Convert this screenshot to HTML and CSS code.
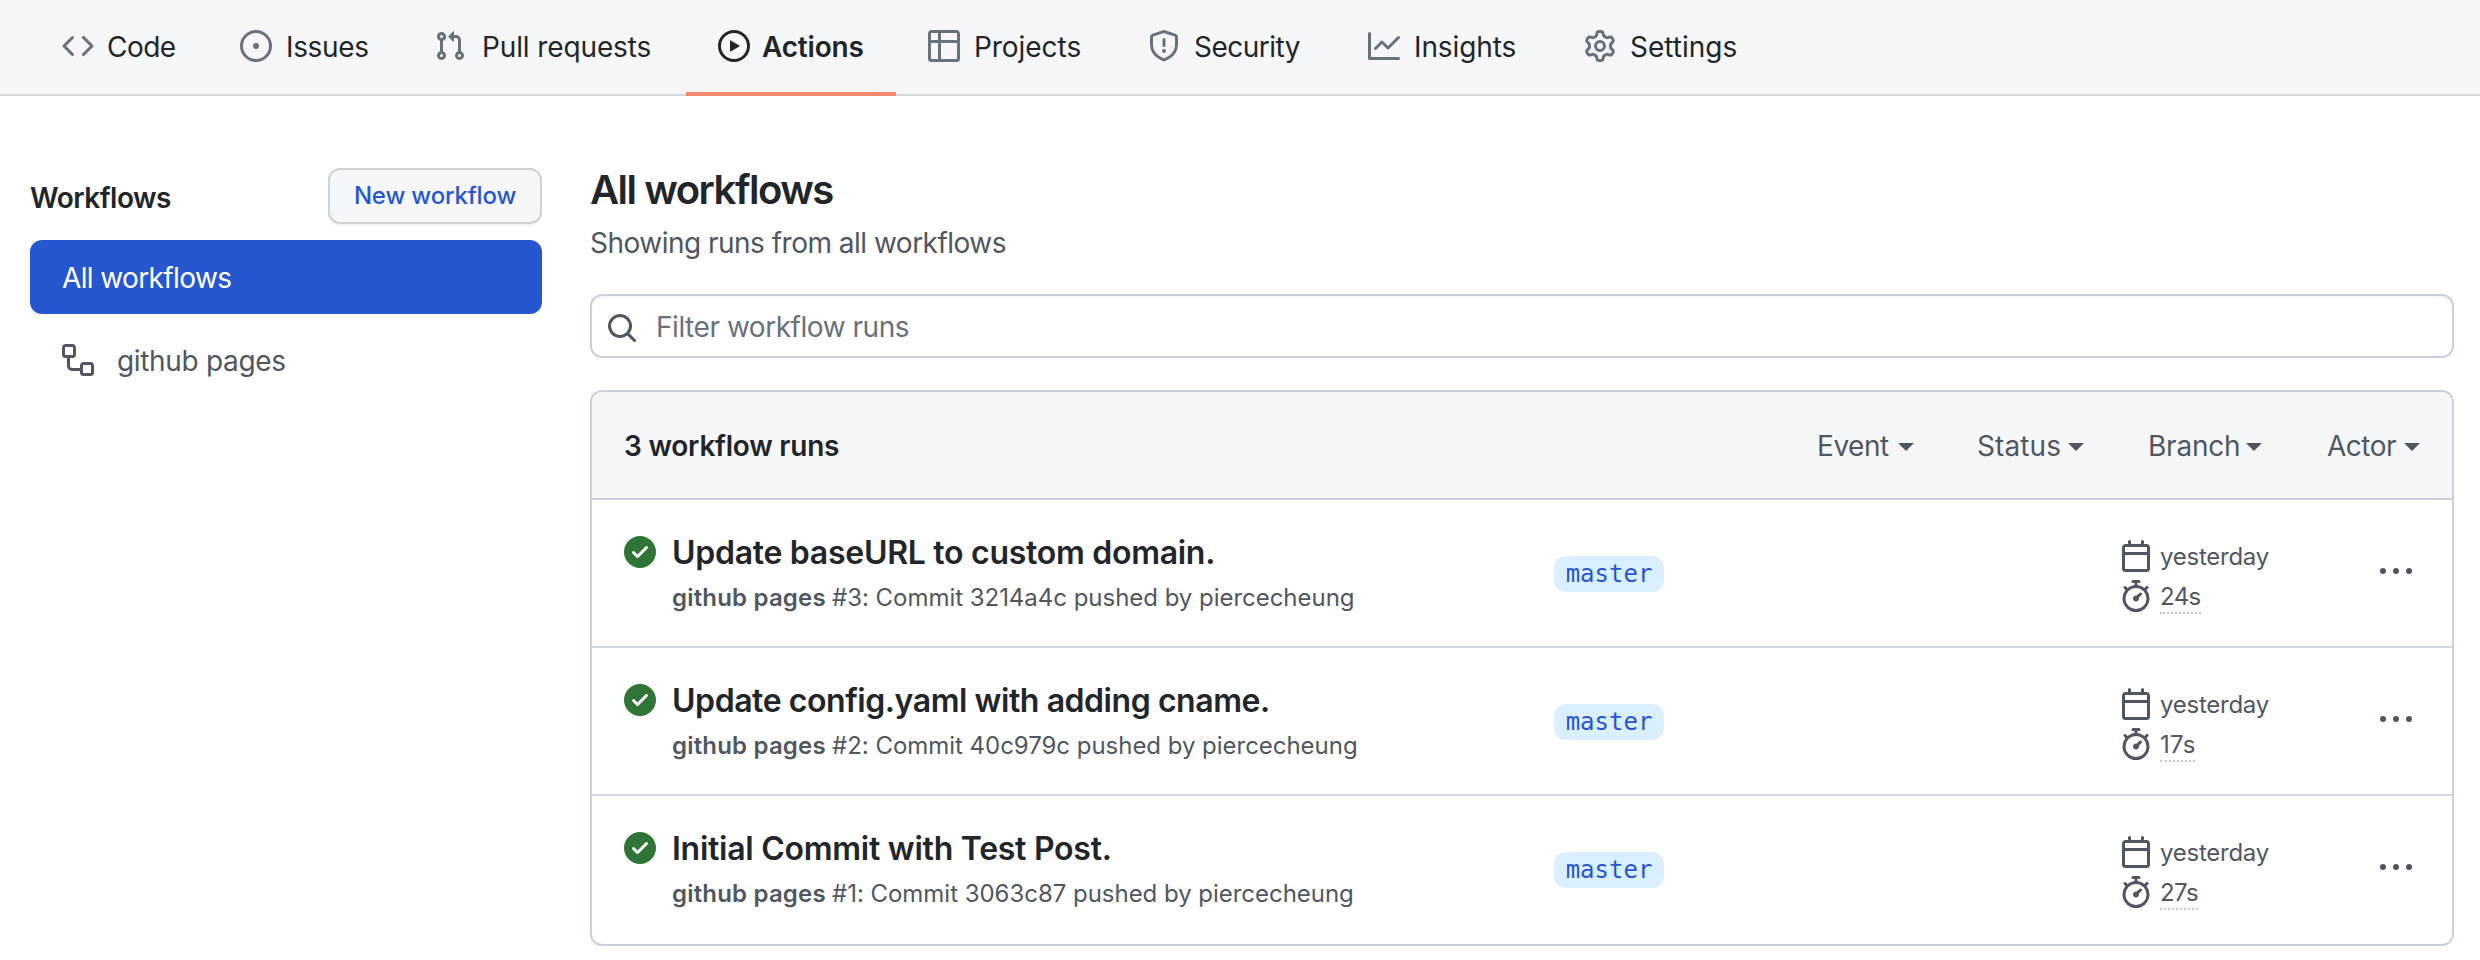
FILE: index.html
```html
<!DOCTYPE html>
<html lang="en">
<head>
<meta charset="utf-8">
<title>Workflow runs</title>
<link rel="stylesheet" href="styles.css">
</head>
<body>
<svg class="sprite" aria-hidden="true">
  <symbol id="i-check" viewBox="0 0 16 16"><path fill-rule="evenodd" d="M8 16A8 8 0 108 0a8 8 0 000 16zm3.78-9.72a.75.75 0 00-1.06-1.06L6.75 9.19 5.28 7.72a.75.75 0 00-1.06 1.06l2 2a.75.75 0 001.06 0l4.5-4.5z"/></symbol>
  <symbol id="i-calendar" viewBox="0 0 16 16"><path fill-rule="evenodd" d="M4.75 0a.75.75 0 01.75.75V2h5V.75a.75.75 0 011.5 0V2h1.25c.966 0 1.75.784 1.75 1.75v10.5A1.75 1.75 0 0113.25 16H2.75A1.75 1.75 0 011 14.25V3.75C1 2.784 1.784 2 2.75 2H4V.75A.75.75 0 014.75 0zm0 3.5h-2a.25.25 0 00-.25.25V6h11V3.75a.25.25 0 00-.25-.25H4.75zM2.5 7.5v6.75c0 .138.112.25.25.25h10.5a.25.25 0 00.25-.25V7.5h-11z"/></symbol>
  <symbol id="i-stopwatch" viewBox="0 0 16 16"><path fill-rule="evenodd" d="M5.75.75A.75.75 0 016.5 0h3a.75.75 0 010 1.5h-.75v1l-.001.041a6.718 6.718 0 013.464 1.435l.007-.006.75-.75a.75.75 0 111.06 1.06l-.75.75-.006.007a6.75 6.75 0 11-10.548 0L2.72 5.03l-.75-.75a.75.75 0 011.06-1.06l.75.75.007.006A6.718 6.718 0 017.25 2.541a.756.756 0 010-.041v-1H6.5a.75.75 0 01-.75-.75zM8 14.5A5.25 5.25 0 108 4a5.25 5.25 0 000 10.5zm.389-6.7l1.33-1.33a.75.75 0 111.061 1.06L9.45 8.861A1.502 1.502 0 018 10.75a1.5 1.5 0 11.389-2.95z"/></symbol>
  <symbol id="i-dots" viewBox="0 0 16 16"><circle cx="1.5" cy="8" r="1.5"/><circle cx="8" cy="8" r="1.5"/><circle cx="14.5" cy="8" r="1.5"/></symbol>
</svg>

<nav class="tabs">
  <a class="tab tab-code"><svg class="icon" viewBox="0 0 16 16"><path d="M4.72 3.22a.75.75 0 011.06 1.06L2.06 8l3.72 3.72a.75.75 0 11-1.06 1.06L.47 8.53a.75.75 0 010-1.06l4.25-4.25zm6.56 0a.75.75 0 10-1.06 1.06L13.94 8l-3.72 3.72a.75.75 0 101.06 1.06l4.25-4.25a.75.75 0 000-1.06l-4.25-4.25z"/></svg><span>Code</span></a>
  <a class="tab tab-issues"><svg class="icon" viewBox="0 0 16 16"><path fill-rule="evenodd" d="M8 9.5a1.5 1.5 0 100-3 1.5 1.5 0 000 3zM8 0a8 8 0 100 16A8 8 0 008 0zM1.5 8a6.5 6.5 0 1113 0 6.5 6.5 0 01-13 0z"/></svg><span>Issues</span></a>
  <a class="tab tab-pulls"><svg class="icon" viewBox="0 0 16 16"><path fill-rule="evenodd" d="M7.177 3.073L9.573.677A.25.25 0 0110 .854v4.792a.25.25 0 01-.427.177L7.177 3.427a.25.25 0 010-.354zM3.75 2.5a.75.75 0 100 1.5.75.75 0 000-1.5zm-2.25.75a2.25 2.25 0 113 2.122v5.256a2.251 2.251 0 11-1.5 0V5.372A2.25 2.25 0 011.5 3.25zM11 2.5h-1V4h1a1 1 0 011 1v5.628a2.251 2.251 0 101.5 0V5A2.5 2.5 0 0011 2.5zm1 10.25a.75.75 0 111.5 0 .75.75 0 01-1.5 0zM3.75 12a.75.75 0 100 1.5.75.75 0 000-1.5z"/></svg><span>Pull requests</span></a>
  <a class="tab tab-actions selected"><svg class="icon" viewBox="0 0 16 16"><path fill-rule="evenodd" d="M1.5 8a6.5 6.5 0 1113 0 6.5 6.5 0 01-13 0zM8 0a8 8 0 100 16A8 8 0 008 0zM6.379 5.227A.25.25 0 006 5.442v5.117a.25.25 0 00.379.214l4.264-2.559a.25.25 0 000-.428L6.379 5.227z"/></svg><span>Actions</span></a>
  <a class="tab tab-projects"><svg class="icon" viewBox="0 0 16 16"><path fill-rule="evenodd" d="M0 1.75C0 .784.784 0 1.75 0h12.5C15.216 0 16 .784 16 1.75v12.5A1.75 1.75 0 0114.25 16H1.75A1.75 1.75 0 010 14.25V1.75zM1.5 6.5v7.75c0 .138.112.25.25.25H5v-8H1.5zM5 5H1.5V1.75a.25.25 0 01.25-.25H5V5zm1.5 1.5v8h7.75a.25.25 0 00.25-.25V6.5h-8zm8-1.5h-8V1.5h7.75a.25.25 0 01.25.25V5z"/></svg><span>Projects</span></a>
  <a class="tab tab-security"><svg class="icon" viewBox="0 0 16 16"><path fill-rule="evenodd" d="M7.467.133a1.75 1.75 0 011.066 0l5.25 1.68A1.75 1.75 0 0115 3.48V7c0 1.566-.32 3.182-1.303 4.682-.983 1.498-2.585 2.813-5.032 3.855a1.7 1.7 0 01-1.33 0c-2.447-1.042-4.049-2.357-5.032-3.855C1.32 10.182 1 8.566 1 7V3.48a1.75 1.75 0 011.217-1.667l5.25-1.68zm.61 1.429a.25.25 0 00-.153 0l-5.25 1.68a.25.25 0 00-.174.238V7c0 1.358.275 2.666 1.057 3.86.784 1.194 2.121 2.34 4.366 3.297a.2.2 0 00.154 0c2.245-.956 3.582-2.104 4.366-3.298C13.225 9.666 13.5 8.36 13.5 7V3.48a.25.25 0 00-.174-.237l-5.25-1.68zM9 10.5a1 1 0 11-2 0 1 1 0 012 0zm-.25-5.75a.75.75 0 10-1.5 0v3a.75.75 0 001.5 0v-3z"/></svg><span>Security</span></a>
  <a class="tab tab-insights"><svg class="icon" viewBox="0 0 16 16"><path fill-rule="evenodd" d="M1.5 1.75a.75.75 0 00-1.5 0v12.5c0 .414.336.75.75.75h14.5a.75.75 0 000-1.5H1.5V1.75zm14.28 2.53a.75.75 0 00-1.06-1.06L10 7.94 7.53 5.47a.75.75 0 00-1.06 0L3.22 8.72a.75.75 0 001.06 1.06L7 7.06l2.47 2.47a.75.75 0 001.06 0l5.25-5.25z"/></svg><span>Insights</span></a>
  <a class="tab tab-settings"><svg class="icon" viewBox="0 0 16 16"><path fill-rule="evenodd" d="M7.429 1.525a6.593 6.593 0 011.142 0c.036.003.108.036.137.146l.289 1.105c.147.56.55.967.997 1.189.174.086.341.183.501.29.417.278.97.423 1.53.27l1.102-.303c.11-.03.175.016.195.046.219.31.41.641.573.989.014.031.022.11-.059.19l-.815.806c-.411.406-.562.957-.53 1.456a4.588 4.588 0 010 .582c-.032.499.119 1.05.53 1.456l.815.806c.08.08.073.159.059.19a6.494 6.494 0 01-.573.99c-.02.029-.086.074-.195.045l-1.103-.303c-.559-.153-1.112-.008-1.529.27-.16.107-.327.204-.5.29-.449.222-.851.628-.998 1.189l-.289 1.105c-.029.11-.101.143-.137.146a6.613 6.613 0 01-1.142 0c-.036-.003-.108-.037-.137-.146l-.289-1.105c-.147-.56-.55-.967-.997-1.189a4.502 4.502 0 01-.501-.29c-.417-.278-.97-.423-1.53-.27l-1.102.303c-.11.03-.175-.016-.195-.046a6.492 6.492 0 01-.573-.989c-.014-.031-.022-.11.059-.19l.815-.806c.411-.406.562-.957.53-1.456a4.587 4.587 0 010-.582c.032-.499-.119-1.05-.53-1.456l-.815-.806c-.08-.08-.073-.159-.059-.19a6.44 6.44 0 01.573-.99c.02-.029.086-.075.195-.045l1.103.303c.559.153 1.112.008 1.529-.27.16-.107.327-.204.5-.29.449-.222.851-.628.998-1.189l.289-1.105c.029-.11.101-.143.137-.146zM8 0c-.236 0-.47.01-.701.03-.743.065-1.29.615-1.458 1.261l-.29 1.106c-.017.066-.078.158-.211.224a5.994 5.994 0 00-.668.386c-.123.082-.233.09-.3.071L3.27 2.776c-.644-.177-1.392.02-1.82.63a7.977 7.977 0 00-.704 1.217c-.315.675-.111 1.422.363 1.891l.815.806c.05.048.098.147.088.294a6.084 6.084 0 000 .772c.01.147-.038.246-.088.294l-.815.806c-.474.469-.678 1.216-.363 1.891.2.428.436.835.704 1.218.428.609 1.176.806 1.82.63l1.103-.303c.066-.019.176-.011.299.071.213.143.436.272.668.386.133.066.194.158.212.224l.289 1.106c.169.646.715 1.196 1.458 1.26a8.094 8.094 0 001.402 0c.743-.064 1.29-.614 1.458-1.26l.29-1.106c.017-.066.078-.158.211-.224a5.98 5.98 0 00.668-.386c.123-.082.233-.09.3-.071l1.102.302c.644.177 1.392-.02 1.82-.63.268-.382.505-.789.704-1.217.315-.675.111-1.422-.364-1.891l-.814-.806c-.05-.048-.098-.147-.088-.294a6.1 6.1 0 000-.772c-.01-.147.039-.246.088-.294l.814-.806c.475-.469.679-1.216.364-1.891a7.992 7.992 0 00-.704-1.218c-.428-.609-1.176-.806-1.82-.63l-1.103.303c-.066.019-.176.011-.299-.071a5.991 5.991 0 00-.668-.386c-.133-.066-.194-.158-.212-.224L10.16 1.29C9.99.645 9.444.095 8.701.031A8.094 8.094 0 008 0zm1.5 8a1.5 1.5 0 11-3 0 1.5 1.5 0 013 0zM11 8a3 3 0 11-6 0 3 3 0 016 0z"/></svg><span>Settings</span></a>
</nav>

<div class="page">
  <aside class="sidebar">
    <div class="sidebar-head">
      <h3 class="sidebar-title">Workflows</h3>
      <button class="btn">New workflow</button>
    </div>
    <a class="side-item current"><span>All workflows</span></a>
    <a class="side-item"><svg class="icon" viewBox="0 0 16 16"><path fill-rule="evenodd" d="M0 1.75C0 .784.784 0 1.75 0h3.5C6.216 0 7 .784 7 1.75v3.5A1.75 1.75 0 015.25 7H4v4a1 1 0 001 1h4v-1.25C9 9.784 9.784 9 10.75 9h3.5c.966 0 1.75.784 1.75 1.75v3.5A1.75 1.75 0 0114.25 16h-3.5A1.75 1.75 0 019 14.25v-.75H5A2.5 2.5 0 012.5 11V7h-.75A1.75 1.75 0 010 5.25v-3.5zm1.75-.25a.25.25 0 00-.25.25v3.5c0 .138.112.25.25.25h3.5a.25.25 0 00.25-.25v-3.5a.25.25 0 00-.25-.25h-3.5zm9 9a.25.25 0 00-.25.25v3.5c0 .138.112.25.25.25h3.5a.25.25 0 00.25-.25v-3.5a.25.25 0 00-.25-.25h-3.5z"/></svg><span class="side-name">github pages</span></a>
  </aside>

  <main class="content">
    <h2 class="title">All workflows</h2>
    <p class="subtitle">Showing runs from all workflows</p>
    <div class="search">
      <svg class="icon" viewBox="0 0 16 16"><path fill-rule="evenodd" d="M11.5 7a4.499 4.499 0 11-8.998 0A4.499 4.499 0 0111.5 7zm-.82 4.74a6 6 0 111.06-1.06l3.04 3.04a.75.75 0 11-1.06 1.06l-3.04-3.04z"/></svg>
      <span class="placeholder">Filter workflow runs</span>
    </div>

    <section class="runs">
      <header class="runs-head">
        <strong class="count">3 workflow runs</strong>
        <div class="filters">
          <span class="filter f-event">Event</span>
          <span class="filter f-status">Status</span>
          <span class="filter f-branch">Branch</span>
          <span class="filter f-actor">Actor</span>
        </div>
      </header>

      <article class="run">
        <svg class="icon ok"><use href="#i-check"/></svg>
        <div class="info">
          <h4 class="run-title t3">Update baseURL to custom domain.</h4>
          <p class="run-sub"><b class="wf">github pages</b> <span>#3: Commit 3214a4c pushed by piercecheung</span></p>
        </div>
        <div><span class="branch">master</span></div>
        <div class="meta">
          <div class="meta-line"><svg class="icon"><use href="#i-calendar"/></svg><span class="when">yesterday</span></div>
          <div class="meta-line"><svg class="icon"><use href="#i-stopwatch"/></svg><span class="duration">24s</span></div>
        </div>
        <svg class="icon menu"><use href="#i-dots"/></svg>
      </article>

      <article class="run">
        <svg class="icon ok"><use href="#i-check"/></svg>
        <div class="info">
          <h4 class="run-title t2">Update config.yaml with adding cname.</h4>
          <p class="run-sub"><b class="wf">github pages</b> <span>#2: Commit 40c979c pushed by piercecheung</span></p>
        </div>
        <div><span class="branch">master</span></div>
        <div class="meta">
          <div class="meta-line"><svg class="icon"><use href="#i-calendar"/></svg><span class="when">yesterday</span></div>
          <div class="meta-line"><svg class="icon"><use href="#i-stopwatch"/></svg><span class="duration d17">17s</span></div>
        </div>
        <svg class="icon menu"><use href="#i-dots"/></svg>
      </article>

      <article class="run">
        <svg class="icon ok"><use href="#i-check"/></svg>
        <div class="info">
          <h4 class="run-title t1">Initial Commit with Test Post.</h4>
          <p class="run-sub"><b class="wf">github pages</b> <span>#1: Commit 3063c87 pushed by piercecheung</span></p>
        </div>
        <div><span class="branch">master</span></div>
        <div class="meta">
          <div class="meta-line"><svg class="icon"><use href="#i-calendar"/></svg><span class="when">yesterday</span></div>
          <div class="meta-line"><svg class="icon"><use href="#i-stopwatch"/></svg><span class="duration">27s</span></div>
        </div>
        <svg class="icon menu"><use href="#i-dots"/></svg>
      </article>
    </section>
  </main>
</div>
</body>
</html>
```
FILE: styles.css
```css
* { box-sizing: border-box; }

body {
  margin: 0;
  height: 960px;
  overflow: hidden;
  background: #fff;
  color: #22262b;
  font: 400 28px/42px Inter, "Liberation Sans", sans-serif;
}

h2, h3, h4, p { margin: 0; }

.sprite { display: none; }

.icon {
  display: block;
  flex: none;
  width: 32px;
  height: 32px;
  fill: #505761;
}

/* Repository tabs */
.tabs {
  display: flex;
  height: 96px;
  padding-left: 30px;
  background: #f6f7f9;
  border-bottom: 2px solid #d2d9df;
}

.tab {
  display: flex;
  align-items: center;
  flex: none;
  gap: 14px;
  height: 96px;
  padding: 0 0 4px 32px;
  white-space: nowrap;
}

.tab .icon { fill: #69717c; }
.tab span { padding-top: 1px; }

.tab-code { width: 178px; gap: 13px; letter-spacing: -0.55px; }
.tab-issues { width: 194px; letter-spacing: -0.35px; }
.tab-pulls { width: 284px; gap: 16px; letter-spacing: -0.12px; }
.tab-actions { width: 210px; gap: 12px; letter-spacing: -0.2px; }
.tab-projects { width: 220px; letter-spacing: -0.05px; }
.tab-security { width: 220px; letter-spacing: -0.5px; }
.tab-insights { width: 216px; letter-spacing: -0.1px; }
.tab-settings { width: 216px; letter-spacing: 0; }

.tab.selected {
  padding-bottom: 0;
  border-bottom: 4px solid #f2876b;
  font-weight: 600;
}
.tab.selected .icon { fill: #22262b; }

.page {
  display: flex;
  gap: 48px;
  padding: 70px 26px 0 30px;
}

/* Sidebar */
.sidebar {
  flex: none;
  width: 512px;
  padding-top: 2px;
}

.sidebar-head {
  display: flex;
  justify-content: space-between;
  height: 56px;
  margin-bottom: 16px;
}

.sidebar-title {
  padding-top: 9px;
  font-size: 28px;
  font-weight: 600;
  letter-spacing: -0.5px;
}

.btn {
  width: 214px;
  height: 56px;
  padding: 0;
  border: 2px solid #d0d2d6;
  border-radius: 12px;
  background: #f6f7f9;
  box-shadow: 0 2px 0 rgba(31, 35, 40, 0.04);
  color: #2756d1;
  font: 500 24px/40px Inter, "Liberation Sans", sans-serif;
  letter-spacing: -0.18px;
}

.side-item {
  display: flex;
  align-items: center;
  height: 74px;
  margin-bottom: 9px;
  padding-left: 32px;
  border-radius: 12px;
  color: #505761;
}
.side-item span { padding-top: 1px; }

.side-item.current {
  background: #2756d1;
  color: #fff;
  letter-spacing: -0.62px;
}

.side-name {
  margin-left: 23px;
  letter-spacing: -0.33px;
}

/* Main column */
.content { flex: 1; min-width: 0; }

.title {
  font-size: 40px;
  line-height: 48px;
  font-weight: 600;
  letter-spacing: -1.48px;
}

.subtitle {
  margin: 8px 0 30px;
  color: #505761;
  letter-spacing: -0.51px;
}

.search {
  display: flex;
  align-items: center;
  height: 64px;
  margin-bottom: 32px;
  padding-left: 14px;
  border: 2px solid #cbd1da;
  border-radius: 12px;
  box-shadow: inset 0 2px 0 rgba(208, 215, 222, 0.2);
}

.search .icon { margin-top: 4px; }

.placeholder {
  margin-left: 18px;
  padding-top: 1px;
  color: #69717c;
  letter-spacing: -0.46px;
}

.runs {
  height: 556px;
  border: 2px solid #cbd1da;
  border-radius: 12px;
  overflow: hidden;
}

.runs-head {
  display: flex;
  align-items: center;
  height: 108px;
  padding: 0 32px;
  border-bottom: 2px solid #cbd1da;
  background: #f6f7f9;
}

.count {
  padding-top: 2px;
  font-weight: 600;
  letter-spacing: -0.23px;
}

.filters {
  display: flex;
  margin-left: auto;
  padding-top: 2px;
  color: #505761;
}

.filter {
  display: flex;
  align-items: center;
  justify-content: space-between;
}

.filter::after {
  content: "";
  margin-top: 1px;
  border: 8px solid transparent;
  border-top-color: currentColor;
  border-bottom: 0;
}

.f-event { width: 97px; letter-spacing: -0.45px; }
.f-status { width: 107px; margin-left: 63px; letter-spacing: 0.1px; }
.f-branch { width: 114px; margin-left: 64px; letter-spacing: -0.2px; }
.f-actor { width: 93px; margin-left: 65px; letter-spacing: -0.5px; }

/* Run rows */
.run {
  display: grid;
  grid-template-columns: 48px 882px 566px 260px 32px;
  height: 148px;
  padding-left: 32px;
  border-bottom: 2px solid #d2d9df;
}
.run:last-child { border-bottom: 0; }

.ok { margin-top: 36px; fill: #2f7636; }

.info { padding-top: 32px; }

.run-title {
  font-size: 32px;
  line-height: 41px;
  font-weight: 600;
}
.t3 { letter-spacing: -0.28px; }
.t2 { letter-spacing: -0.44px; }
.t1 { letter-spacing: -0.26px; }

.run-sub {
  display: flex;
  gap: 8px;
  margin-top: 6px;
  color: #505761;
  font-size: 24px;
  line-height: 37px;
  letter-spacing: -0.03px;
}

.wf { width: 152px; font-weight: 600; letter-spacing: 0.18px; white-space: nowrap; }

.branch {
  display: block;
  width: 110px;
  height: 36px;
  margin-top: 56px;
  border-radius: 12px;
  background: #daf0fe;
  color: #2756d1;
  font: 24px/36px "DejaVu Sans Mono", "Liberation Mono", monospace;
  text-align: center;
}

.meta {
  padding-top: 40px;
  color: #505761;
  font-size: 24px;
}

.meta-line {
  display: flex;
  gap: 8px;
  height: 40px;
}

.when { line-height: 34px; letter-spacing: -0.25px; }

.duration {
  height: 34px;
  line-height: 34px;
  border-bottom: 2px dotted #c4cad2;
  letter-spacing: -0.6px;
}
.d17 { letter-spacing: 0.14px; }

.menu { margin-top: 55px; }
```
